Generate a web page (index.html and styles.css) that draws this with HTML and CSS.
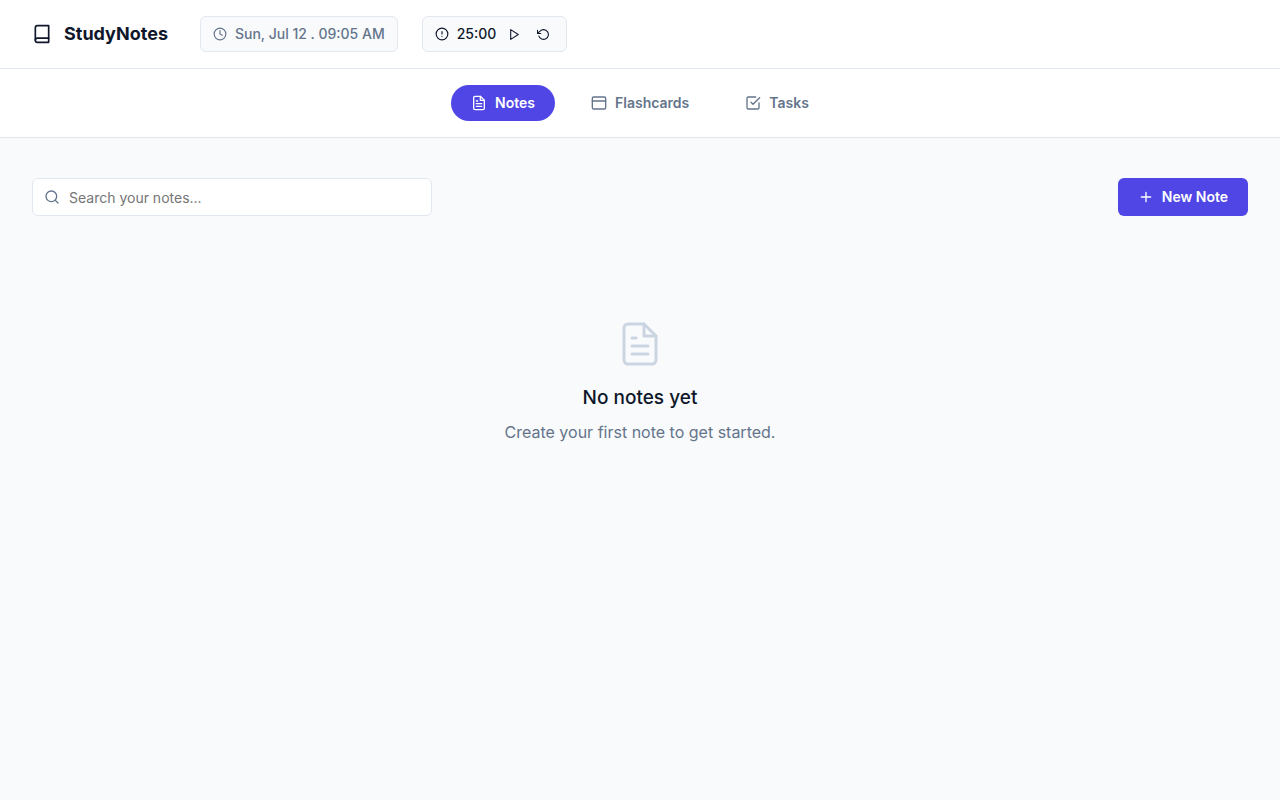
FILE: index.html
```html
<!DOCTYPE html>
<html lang="en">
<head>
<meta charset="utf-8">
<meta name="viewport" content="width=device-width, initial-scale=1">
<title>StudyNotes</title>
<link rel="stylesheet" href="styles.css">
</head>
<body>
<header class="header">
  <div class="brand">
    <svg class="icon icon-lg" viewBox="0 0 24 24" aria-hidden="true"><path d="M4 19.5A2.5 2.5 0 0 1 6.500 17H20"/><path d="M6.500 2H20v20H6.500A2.500 2.500 0 0 1 4 19.500v-15A2.500 2.500 0 0 1 6.500 2z"/></svg>
    <h1 class="brand-name">StudyNotes</h1>
  </div>
  <div class="chip chip-clock">
    <svg class="icon icon-sm" viewBox="0 0 24 24" aria-hidden="true"><circle cx="12" cy="12" r="10"/><path d="M12 6v6l4 2"/></svg>
    <span>Sun, Jul 12 . 09:05 AM</span>
  </div>
  <div class="chip chip-timer">
    <svg class="icon icon-sm" viewBox="0 0 24 24" aria-hidden="true"><circle cx="12" cy="12" r="10"/><path d="M12 8v4M12 16h.01"/></svg>
    <span>25:00</span>
    <button class="icon-button" type="button" aria-label="Start timer"><svg class="icon icon-xs" viewBox="0 0 24 24" aria-hidden="true"><path d="M5 3l14 9-14 9V3z"/></svg></button>
    <button class="icon-button" type="button" aria-label="Reset timer"><svg class="icon icon-xs" viewBox="0 0 24 24" aria-hidden="true"><path d="M1 4v6h6"/><path d="M3.510 15a9 9 0 1 0 2.130-9.360L1 10"/></svg></button>
  </div>
</header>
<nav class="tabs" aria-label="Sections">
  <button class="tab tab-active" type="button" aria-current="page">
    <svg class="icon" viewBox="0 0 24 24" aria-hidden="true"><path d="M14 2H6a2 2 0 0 0-2 2v16a2 2 0 0 0 2 2h12a2 2 0 0 0 2-2V8z"/><path d="M14 2v6h6M16 13H8M16 17H8M10 9H8"/></svg>
    Notes
  </button>
  <button class="tab" type="button">
    <svg class="icon" viewBox="0 0 24 24" aria-hidden="true"><rect x="2" y="3" width="20" height="18" rx="2"/><path d="M2 9h20"/></svg>
    Flashcards
  </button>
  <button class="tab" type="button">
    <svg class="icon" viewBox="0 0 24 24" aria-hidden="true"><path d="M9 11l3 3L22 4"/><path d="M21 12v7a2 2 0 0 1-2 2H5a2 2 0 0 1-2-2V5a2 2 0 0 1 2-2h11"/></svg>
    Tasks
  </button>
</nav>
<main class="main">
  <div class="toolbar">
    <label class="search">
      <svg class="icon search-icon" viewBox="0 0 24 24" aria-hidden="true"><circle cx="11" cy="11" r="8"/><path d="M21 21l-4.350-4.350"/></svg>
      <input class="search-input" type="text" placeholder="Search your notes..." aria-label="Search your notes">
    </label>
    <button class="primary" type="button">
      <svg class="icon" viewBox="0 0 24 24" aria-hidden="true"><path d="M12 5v14M5 12h14"/></svg>
      New Note
    </button>
  </div>
  <section class="empty">
    <svg class="icon empty-icon" viewBox="0 0 24 24" aria-hidden="true"><path d="M14 2H6a2 2 0 0 0-2 2v16a2 2 0 0 0 2 2h12a2 2 0 0 0 2-2V8z"/><path d="M14 2v6h6M16 13H8M16 17H8M10 9H8"/></svg>
    <h2 class="empty-title">No notes yet</h2>
    <p class="empty-text">Create your first note to get started.</p>
  </section>
</main>
</body>
</html>
```
FILE: styles.css
```css
* {
  box-sizing: border-box;
}

body {
  margin: 0;
  min-height: 100vh;
  background: #f8fafc;
  color: #0f172a;
  font-family: Inter, "Liberation Sans", sans-serif;
  font-size: 16px;
  line-height: 24px;
}

button,
input {
  font: inherit;
}

button {
  cursor: pointer;
}

.icon {
  display: block;
  flex: none;
  width: 16px;
  height: 16px;
  fill: none;
  stroke: currentColor;
  stroke-width: 2;
  stroke-linecap: round;
  stroke-linejoin: round;
}

.icon-xs {
  width: 13px;
  height: 13px;
}

.icon-sm {
  width: 14px;
  height: 14px;
}

.icon-lg {
  width: 20px;
  height: 20px;
}

.header {
  display: flex;
  align-items: center;
  gap: 24px;
  padding: 16px 32px;
  background: #fff;
  border-bottom: 1px solid #e2e8f0;
}

.brand {
  display: flex;
  align-items: center;
  gap: 12px;
  margin-right: 8px;
}

.brand-name {
  margin: 0;
  font-size: 18px;
  font-weight: 700;
}

.chip {
  display: flex;
  align-items: center;
  gap: 8px;
  padding: 6px 12px;
  background: #f8fafc;
  border: 1px solid #e2e8f0;
  border-radius: 6px;
  font-size: 14px;
  font-weight: 500;
  line-height: 22px;
}

.chip-clock {
  color: #64748b;
}

.icon-button {
  padding: 4px;
  background: none;
  border: 0;
  border-radius: 4px;
  color: inherit;
}

.tabs {
  display: flex;
  justify-content: center;
  gap: 16px;
  padding: 16px 32px;
  background: #fff;
  border-bottom: 1px solid #e2e8f0;
}

.tab {
  display: flex;
  align-items: center;
  gap: 8px;
  padding: 8px 20px;
  background: none;
  border: 0;
  border-radius: 18px;
  color: #64748b;
  font-size: 14px;
  font-weight: 600;
  line-height: 20px;
}

.tab-active {
  background: #4f46e5;
  color: #fff;
}

.main {
  padding: 40px 32px;
}

.toolbar {
  display: flex;
  align-items: center;
  justify-content: space-between;
  gap: 16px;
}

.search {
  position: relative;
  flex: 0 1 400px;
}

.search-icon {
  position: absolute;
  top: 11px;
  left: 12px;
  color: #64748b;
}

.search-input {
  display: block;
  width: 100%;
  height: 38px;
  padding: 8px 12px 8px 36px;
  background: #fff;
  border: 1px solid #e2e8f0;
  border-radius: 6px;
  color: #0f172a;
  font-size: 14px;
}

.primary {
  display: flex;
  align-items: center;
  gap: 8px;
  padding: 7px 20px;
  background: #4f46e5;
  border: 0;
  border-radius: 6px;
  color: #fff;
  font-size: 14px;
  font-weight: 600;
  line-height: 24px;
}

.empty {
  display: flex;
  flex-direction: column;
  align-items: center;
  padding: 104px 16px 64px;
  text-align: center;
}

.empty-icon {
  width: 48px;
  height: 48px;
  color: #cbd5e1;
  stroke-width: 1.5;
}

.empty-title {
  margin: 16px 0 8px;
  font-size: 19px;
  font-weight: 500;
  line-height: 28px;
}

.empty-text {
  margin: 0;
  color: #64748b;
}
```
